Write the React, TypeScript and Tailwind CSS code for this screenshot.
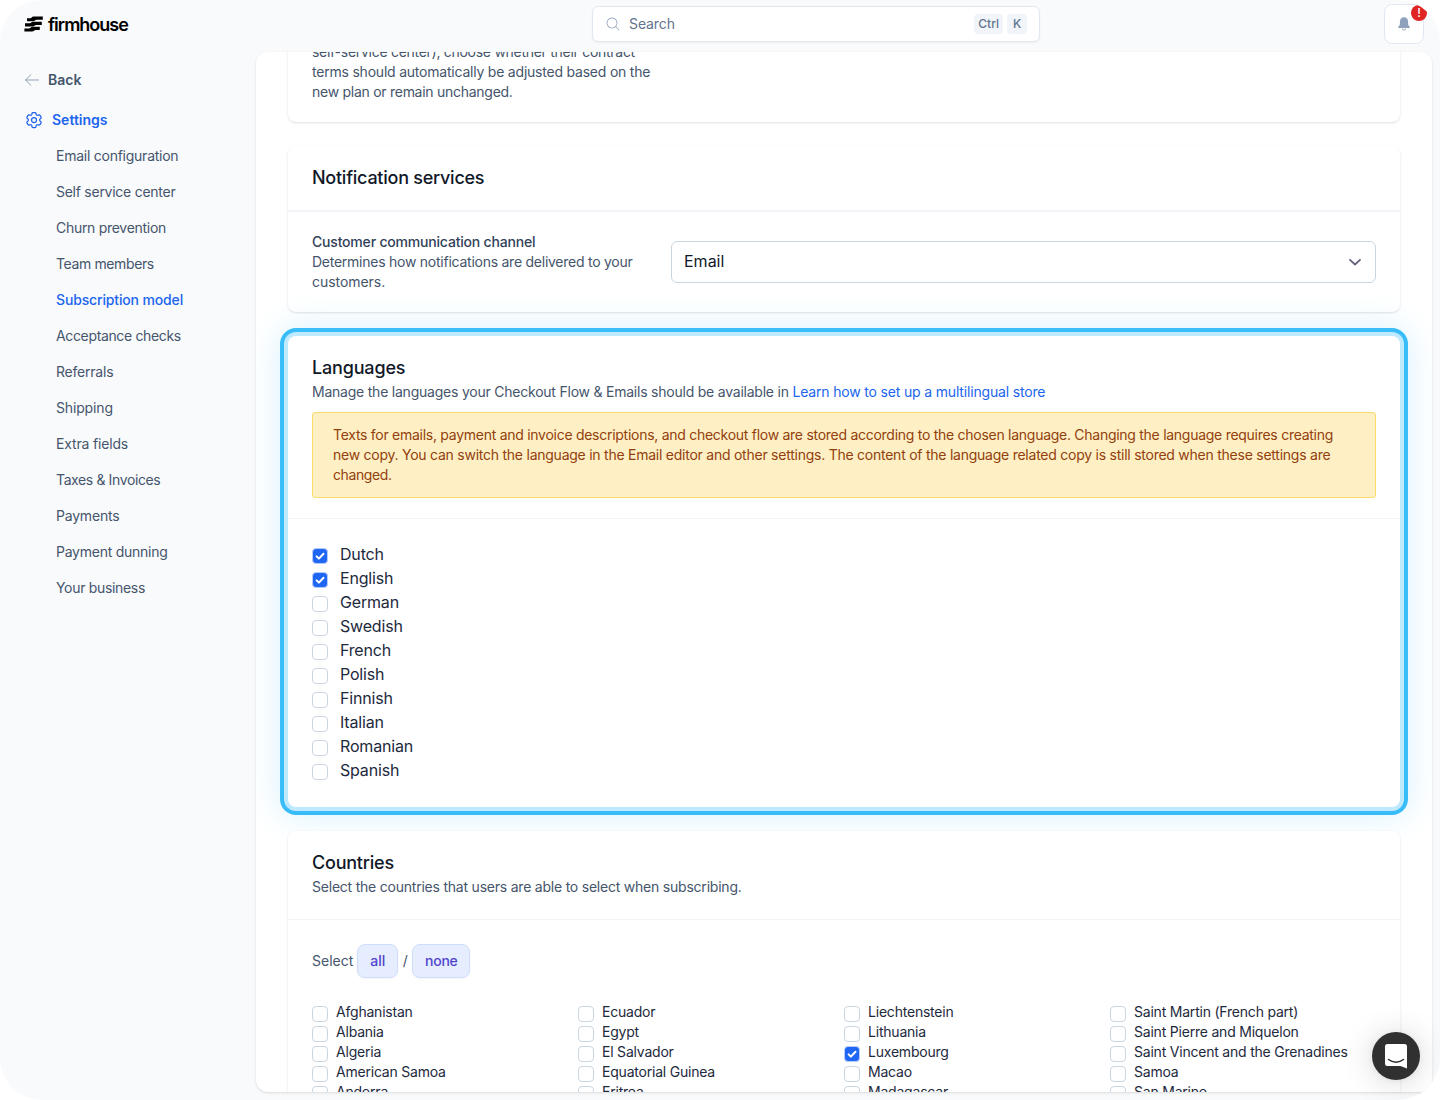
import React from 'react'
import clsx from 'clsx'
import { PiMagnifyingGlassLight } from 'react-icons/pi'
import { HiOutlineCog6Tooth } from 'react-icons/hi2'

const navItems = [
  { label: 'Email configuration', className: 'tracking-[-0.25px]' },
  { label: 'Self service center', className: 'tracking-[-0.26px]' },
  { label: 'Churn prevention', className: 'tracking-[-0.29px]' },
  { label: 'Team members', className: 'tracking-[-0.38px]' },
  { label: 'Subscription model', className: 'tracking-[-0.15px]' },
  { label: 'Acceptance checks', className: 'tracking-[-0.35px]' },
  { label: 'Referrals', className: 'tracking-[-0.22px]' },
  { label: 'Shipping', className: 'tracking-[-0.15px]' },
  { label: 'Extra fields', className: 'tracking-[-0.17px]' },
  { label: 'Taxes & Invoices', className: 'tracking-[-0.38px]' },
  { label: 'Payments', className: 'tracking-[-0.2px]' },
  { label: 'Payment dunning', className: 'tracking-[-0.25px]' },
  { label: 'Your business', className: 'tracking-[-0.32px]' },
]

const languages = ['Dutch', 'English', 'German', 'Swedish', 'French', 'Polish', 'Finnish', 'Italian', 'Romanian', 'Spanish']

const countries = [
  ['Afghanistan', 'Albania', 'Algeria', 'American Samoa', 'Andorra'],
  ['Ecuador', 'Egypt', 'El Salvador', 'Equatorial Guinea', 'Eritrea'],
  ['Liechtenstein', 'Lithuania', 'Luxembourg', 'Macao', 'Madagascar'],
  ['Saint Martin (French part)', 'Saint Pierre and Miquelon', 'Saint Vincent and the Grenadines', 'Samoa', 'San Marino'],
]

const Checkbox: React.FC<{ checked?: boolean; className?: string }> = ({ checked, className }) => (
  <span
    className={clsx(
      'flex h-4 w-4 flex-shrink-0 items-center justify-center rounded border',
      checked ? 'border-[#b5cdf8] bg-[#1f66f4]' : 'border-slate-300 bg-white',
      className,
    )}
  >
    {checked && (
      <svg viewBox="0 0 16 16" className="h-4 w-4 flex-shrink-0" fill="none" stroke="white" strokeWidth="2" strokeLinecap="round" strokeLinejoin="round">
        <path d="M4.6 8.4l2.3 2.2 4.6-4.9" />
      </svg>
    )}
  </span>
)

const Card: React.FC<{ className?: string; children: React.ReactNode }> = ({ className, children }) => (
  <section className={clsx('flex-shrink-0 rounded-lg bg-white', className ?? 'shadow-[0_1px_3px_rgba(0,0,0,0.1),0_1px_2px_-1px_rgba(0,0,0,0.1)]')}>
    {children}
  </section>
)

const Logo: React.FC = () => (
  <div className="flex h-12 items-center gap-[5px] pl-6">
    <svg width="19" height="16" viewBox="0 0 19 16" fill="black">
      <path d="M9.500 .5h9.300v3.300h-6c-1.800 0-1.800 1.500-3.800 1.500H3V2.200h3.200C8 2.200 7.700.5 9.500.5z" />
      <path d="M9 5.700h8.800V9h-5.500c-1.800 0-1.800 1.500-3.800 1.500H1V7.300h4.700C7.500 7.300 7.200 5.700 9 5.700z" />
      <path d="M8.500 10.800h7.300v3.300h-4c-1.800 0-1.800 1.500-3.800 1.500H.4v-3.200h4.800c1.800 0 1.500-1.600 3.300-1.600z" />
    </svg>
    <span className="pt-px text-[18px] leading-6 font-semibold tracking-[-1px] text-black">firmhouse</span>
  </div>
)

const Header: React.FC = () => (
  <header className="flex h-[52px] flex-shrink-0">
    <div className="w-64 flex-shrink-0">
      <Logo />
    </div>
    <div className="flex flex-1 justify-center pt-[6px] pr-2">
      <div className="flex h-9 w-[448px] items-center rounded-md border border-slate-200 bg-white px-3 shadow-[0_1px_2px_rgba(0,0,0,0.05)]">
        <PiMagnifyingGlassLight className="h-4 w-4 text-slate-400" />
        <span className="ml-2 flex-1 text-sm tracking-[-0.1px] text-slate-500">Search</span>
        <kbd className="mr-1 rounded bg-slate-100 px-1 font-[Inter] text-xs leading-5 font-medium text-slate-500">Ctrl</kbd>
        <kbd className="w-5 rounded bg-slate-100 text-center font-[Inter] text-xs leading-5 font-medium text-slate-500">K</kbd>
      </div>
    </div>
    <div className="relative mt-1 mr-4 flex h-10 w-10 items-center justify-center rounded-lg border border-slate-200 bg-white">
      <svg width="12" height="14" viewBox="0 0 12 14" fill="#8ea3bb">
        <path d="M6 .3C3.500.3 1.900 2.200 1.900 4.500v3L.3 10c-.3.600 0 1 .5 1h10.400c.5 0 .8-.400.5-1l-1.600-2.500v-3C10.100 2.200 8.500.3 6 .3zM4 11.600a2 2 0 004 0l-.8-.2c0 .700-.5 1.200-1.200 1.200s-1.200-.5-1.200-1.200z" />
      </svg>
      <span className="absolute top-0 right-[-4px] flex h-4 w-4 items-center justify-center rounded-full bg-[#e02424] text-xs leading-none font-medium text-white">!</span>
    </div>
  </header>
)

const Sidebar: React.FC = () => (
  <aside className="w-64 flex-shrink-0 pt-[18px] text-sm">
    <a className="flex h-5 items-center gap-2 pl-6 font-semibold text-slate-600">
      <svg width="16" height="16" viewBox="0 0 16 16" fill="none" stroke="#94a3b8" strokeLinecap="round" strokeLinejoin="round">
        <path d="M14.500 8h-13M6.800 2.800L1.500 8l5.300 5.200" />
      </svg>
      Back
    </a>
    <a className="mt-5 flex h-5 items-center gap-2 pl-6 font-semibold text-[#2065ee]">
      <HiOutlineCog6Tooth className="h-5 w-5" />
      Settings
    </a>
    <nav className="mt-2 pl-14">
      {navItems.map(({ label, className }) => (
        <a
          key={label}
          className={clsx('flex h-9 items-center', className, label === 'Subscription model' ? 'font-medium text-[#2065ee]' : 'text-slate-600')}
        >
          {label}
        </a>
      ))}
    </nav>
  </aside>
)

const NotificationServices: React.FC = () => (
  <Card>
    <h2 className="flex h-16 items-center px-6 text-lg font-medium tracking-[-0.25px] text-gray-900">Notification services</h2>
    <div className="flex items-center border-t-2 border-slate-100 px-6 py-5">
      <div className="w-[359px] text-sm text-slate-600">
        <p className="font-medium tracking-[-0.19px] text-slate-700">Customer communication channel</p>
        <p className="tracking-[-0.25px]">Determines how notifications are delivered to your</p>
        <p className="tracking-[-0.05px]">customers.</p>
      </div>
      <div className="flex h-[42px] flex-1 items-center justify-between rounded-md border border-slate-300 bg-white px-3 text-base text-gray-900">
        <span className="pb-0.5">Email</span>
        <svg width="16" height="16" viewBox="0 0 16 16" fill="none" stroke="#64647d" strokeWidth="1.800" strokeLinecap="round" strokeLinejoin="round">
          <path d="M3 5.800l5 4.700 5-4.700" />
        </svg>
      </div>
    </div>
  </Card>
)

const Languages: React.FC = () => (
  <Card className="shadow-[0_0_0_4px_#bfe9fe,0_0_0_8px_#38bdf8,0_0_34px_8px_rgba(56,189,248,0.2)]">
    <div className="border-b border-slate-100 px-6 pt-[18px] pb-5 text-sm">
      <h2 className="text-lg leading-7 font-medium tracking-[-0.17px] text-gray-900">Languages</h2>
      <p className="text-slate-600">
        <span className="tracking-[-0.225px]">Manage the languages your Checkout Flow &amp; Emails should be available in </span>
        <a className="tracking-[-0.17px] text-[#2065ee]">Learn how to set up a multilingual store</a>
      </p>
      <div className="mt-[10px] rounded-[3px] border border-[#fbdc6a] bg-[#fef0c4] px-5 py-3 whitespace-nowrap text-[#92400e]">
        <p className="tracking-[-0.273px]">
          Texts for emails, payment and invoice descriptions, and checkout flow are stored according to the chosen language. Changing the language requires creating
        </p>
        <p className="tracking-[-0.245px]">
          new copy. You can switch the language in the Email editor and other settings. The content of the language related copy is still stored when these settings are
        </p>
        <p className="tracking-[-0.4px]">changed.</p>
      </div>
    </div>
    <ul className="px-6 pt-[23px] pb-[25px]">
      {languages.map((language, i) => (
        <li key={language} className="flex h-6 items-center gap-3 text-base tracking-[-0.18px] text-slate-800">
          <Checkbox checked={i < 2} className="mt-[3px]" />
          {language}
        </li>
      ))}
    </ul>
  </Card>
)

const Countries: React.FC = () => (
  <Card>
    <div className="border-b border-slate-100 px-6 pt-[18px] pb-[22px]">
      <h2 className="text-lg leading-7 font-medium tracking-[-0.22px] text-gray-900">Countries</h2>
      <p className="text-sm tracking-[-0.22px] text-slate-600">Select the countries that users are able to select when subscribing.</p>
    </div>
    <div className="px-6 pt-6 text-sm">
      <div className="flex items-center gap-1 text-slate-600">
        Select
        <button className="h-[34px] w-[41px] rounded-lg border border-[#cdddfb] bg-[#e5edff] font-medium text-[#5145cd] shadow-xs">all</button>
        <span className="w-1.5 text-center">/</span>
        <button className="h-[34px] w-[58px] rounded-lg border border-[#cdddfb] bg-[#e5edff] font-medium tracking-[-0.3px] text-[#5145cd] shadow-xs">none</button>
      </div>
      <div className="mt-6 grid grid-cols-4">
        {countries.map((column) => (
          <ul key={column[0]}>
            {column.map((country) => (
              <li key={country} className="flex h-5 items-center gap-2 tracking-[-0.21px] whitespace-nowrap text-slate-800">
                <Checkbox checked={country === 'Luxembourg'} className="mt-1" />
                {country}
              </li>
            ))}
          </ul>
        ))}
      </div>
    </div>
  </Card>
)

export default function App() {
  return (
    <div className="relative flex h-[1100px] w-[1440px] flex-col overflow-hidden rounded-[42px] bg-[#f9fafc] font-[Inter,sans-serif]">
      <Header />
      <div className="flex min-h-0 flex-1">
        <Sidebar />
        <main className="mr-2 mb-2 flex flex-1 flex-col gap-6 overflow-hidden rounded-xl bg-white px-8 shadow-[0_1px_3px_rgba(0,0,0,0.1),0_1px_2px_-1px_rgba(0,0,0,0.1)]">
          <Card className="-mt-10 px-6 pt-[30px] pb-5 shadow-[0_1px_3px_rgba(0,0,0,0.1),0_1px_2px_-1px_rgba(0,0,0,0.1)]">
            <div className="text-sm text-slate-600">
              <p className="tracking-[-0.28px]">self-service center), choose whether their contract</p>
              <p className="tracking-[-0.215px]">terms should automatically be adjusted based on the</p>
              <p className="tracking-[-0.27px]">new plan or remain unchanged.</p>
            </div>
          </Card>
          <NotificationServices />
          <Languages />
          <Countries />
        </main>
      </div>
      <button className="absolute right-5 bottom-5 flex h-12 w-12 items-center justify-center rounded-full bg-[#303030] shadow-[0_1px_6px_rgba(0,0,0,0.06),0_2px_32px_rgba(0,0,0,0.16)]">
        <svg width="22" height="25" viewBox="0 0 22 25">
          <path d="M2.500 0h17A2.500 2.500 0 0122 2.500V24.500l-6.500-2.500h-13A2.500 2.500 0 010 19.500v-17A2.500 2.500 0 012.500 0z" fill="white" />
          <path d="M3.500 15.500c4.300 3.500 10.700 3.500 15 0" fill="none" stroke="#303030" strokeWidth="1.500" strokeLinecap="round" />
        </svg>
      </button>
    </div>
  )
}
